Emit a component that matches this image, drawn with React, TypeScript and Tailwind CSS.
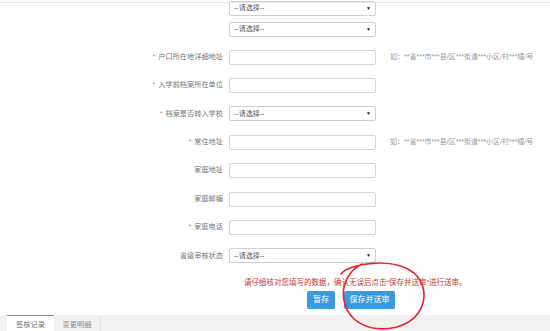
import React from 'react'

const font = { fontFamily: '"Liberation Sans", "Noto Sans CJK SC", sans-serif' }

function Select({ className = '' }: { className?: string }) {
  return (
    <div
      className={`flex items-center justify-between w-[147px] h-[15px] border border-[#cfcfcf] rounded-[2px] bg-white pl-[4px] pr-[4px] text-[7px] text-[#555] ${className}`}
    >
      <span>--请选择--</span>
      <span className="text-[5px] text-[#222]">▼</span>
    </div>
  )
}

function Input() {
  return <div className="w-[147px] h-[15px] border border-[#d6d6d6] rounded-[2px] bg-white" />
}

interface RowProps {
  label: string
  required?: boolean
  select?: boolean
  hint?: string
}

function Row({ label, required, select, hint }: RowProps) {
  return (
    <div className="flex items-center h-[28.4px]">
      <div className="w-[229px] pr-[6px] text-right text-[7.2px] text-[#777] whitespace-nowrap">
        {required && <span className="text-[#e07b7b] mr-[3px]">*</span>}
        {label}
      </div>
      {select ? <Select /> : <Input />}
      {hint && <div className="ml-[14px] text-[7px] text-[#9a9a9a] whitespace-nowrap">{hint}</div>}
    </div>
  )
}

const HINT = '如：**省***市***县/区***街道***小区/村***幢/号'

export default function App() {
  return (
    <div className="relative w-[550px] h-[331px] overflow-hidden bg-white" style={font}>
      {/* cut-off header line */}
      <div className="absolute left-0 right-0 top-[2px] h-px bg-[#e6e6e6]" />

      <div className="flex flex-col pt-[1px]">
        <div className="flex flex-col gap-[6px] pl-[229px]">
          <Select />
          <Select />
        </div>

        <div className="mt-[6px] flex flex-col">
          <Row label="户口所在地详细地址" required hint={HINT} />
          <Row label="入学前档案所在单位" required />
          <Row label="档案是否转入学校" required select />
          <Row label="常住地址" required hint={HINT} />
          <Row label="家庭地址" />
          <Row label="家庭邮编" />
          <Row label="家庭电话" required />
          <Row label="省级审核状态" select />
        </div>

        <div className="mt-[8px] pl-[244px] text-[7.5px] leading-[10px] text-[#c23a35] whitespace-nowrap">
          请仔细核对您填写的数据，确认无误后点击“保存并送审”进行送审。
        </div>

        <div className="mt-[3px] flex gap-[9px] pl-[307px]">
          <button className="w-[28px] h-[18px] rounded-[2px] bg-[#3a9ae0] text-white text-[8px]">暂存</button>
          <button className="w-[51px] h-[18px] rounded-[2px] bg-[#3a9ae0] text-white text-[8px]">保存并送审</button>
        </div>

        <div className="mt-[6px] h-[20px] bg-[#f2f2f2] flex pl-[7px]">
          <div className="w-[47px] bg-white border-t-[1.5px] border-[#4a9ed8] flex items-center justify-center text-[7.2px] text-[#777]">
            签核记录
          </div>
          <div className="w-[47px] border-r border-[#e2e2e2] flex items-center justify-center text-[7.2px] text-[#888]">
            变更明细
          </div>
        </div>
      </div>

      {/* hand-drawn red circle */}
      <svg className="absolute left-0 top-0" width="550" height="331" viewBox="0 0 550 331" fill="none">
        <path
          d="M341 274 C348 264 392 256 414 273 C431 288 427 318 397 327 C368 334 347 320 344 300 C341 285 349 270 362 264"
          stroke="#e3262a"
          strokeWidth="1.6"
          strokeLinecap="round"
        />
      </svg>
    </div>
  )
}
